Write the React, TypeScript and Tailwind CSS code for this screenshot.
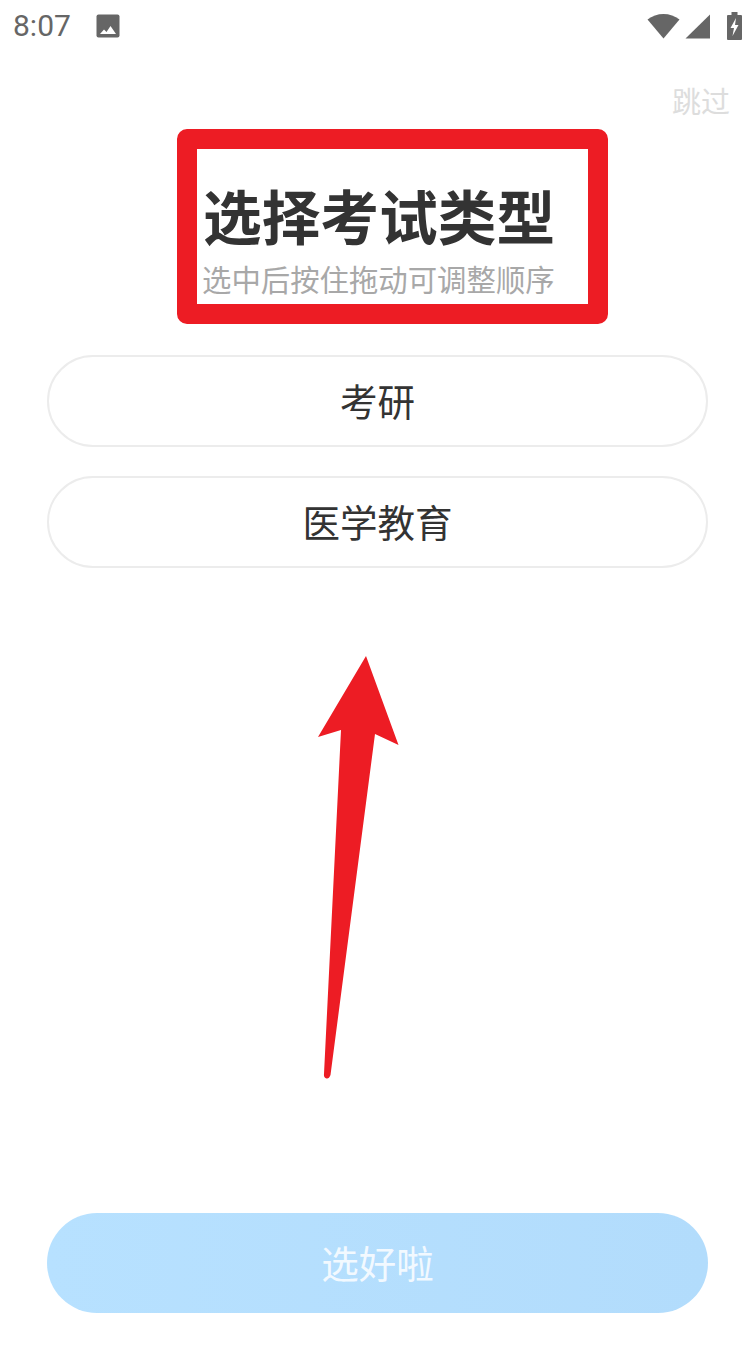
import React from 'react';

const cjk = { fontFamily: '"Noto Sans CJK SC", sans-serif' };

const StatusBar: React.FC = () => (
  <div className="flex h-[52px] items-center pl-[13px] pr-[14px]">
    <span className="font-['Roboto',sans-serif] text-[30px] leading-none text-[#666666]">8:07</span>
    <svg className="ml-[25px] -mt-[1px]" width="24" height="24" viewBox="0 0 24 24">
      <rect x="0.5" y="0.5" width="23" height="23" rx="2" fill="#666666" />
      <path d="M4 20 L8 15.5 L10.5 18 L14.5 12 L20 20 Z" fill="#ffffff" />
    </svg>
    <div className="ml-auto flex items-center">
      <svg width="33" height="26" viewBox="0 0 33 26">
        <path d="M0.5 6.5 C9.5 -1 23.5 -1 32.5 6.5 L16.5 25.5 Z" fill="#666666" />
      </svg>
      <svg className="ml-[5px]" width="26" height="25" viewBox="0 0 26 25">
        <path d="M25 0.5 L25 24.5 L0.5 24.5 Z" fill="#666666" />
      </svg>
      <svg className="ml-[16px]" width="15" height="28" viewBox="0 0 15 28">
        <path d="M4.5 0 H10.5 V3 H14 Q15 3 15 4 V27 Q15 28 14 28 H1 Q0 28 0 27 V4 Q0 3 1 3 H4.5 Z" fill="#666666" />
        <path d="M9 6 L3.5 16 H7 L5.5 24 L11.5 13 H8 Z" fill="#ffffff" />
      </svg>
    </div>
  </div>
);

const OptionButton: React.FC<{ label: string }> = ({ label }) => (
  <button className="flex h-[92px] w-full items-center justify-center rounded-full border-2 border-[#ececec] bg-white pb-[2px] text-[37.5px] leading-none text-[#333333]">
    {label}
  </button>
);

const App: React.FC = () => {
  return (
    <div className="relative flex h-[1345px] w-[756px] flex-col overflow-hidden bg-white" style={cjk}>
      <StatusBar />

      {/* Skip */}
      <div className="mt-[28px] flex justify-end pr-[26px]">
        <span className="text-[29px] leading-[40px] text-[#dddddd]">跳过</span>
      </div>

      {/* Heading */}
      <div className="mt-[9px] ml-[177px] h-[195px] w-[431px] rounded-[10px] border-[20px] border-[#ed1c24]">
        <div className="pt-[32px] pl-[6px]">
          <h1 className="whitespace-nowrap text-[58.7px] font-bold leading-[68px] text-[#333333]">选择考试类型</h1>
          <p className="whitespace-nowrap pt-[9px] -ml-[1px] text-[29.4px] leading-[40px] text-[#a8a8a8]">选中后按住拖动可调整顺序</p>
        </div>
      </div>

      {/* Options */}
      <div className="mt-[31px] flex flex-col gap-[29px] pl-[47px] pr-[48px]">
        <OptionButton label="考研" />
        <OptionButton label="医学教育" />
      </div>

      {/* Confirm */}
      <div className="mt-auto mb-[32px] pl-[47px] pr-[48px]">
        <button className="flex h-[100px] w-full items-center justify-center rounded-full bg-gradient-to-r from-[#b7e1ff] to-[#b2dcfc] pb-[2px] text-[37.5px] leading-none text-[#f2f9ff]">
          选好啦
        </button>
      </div>

      {/* Annotation arrow drawn over the page */}
      <svg className="absolute left-[310px] top-[650px]" width="96" height="436" viewBox="310 650 96 436">
        <path d="M366 656 L398.5 745 L375 734 L330.5 1075 Q329 1079 326.5 1078.5 Q323.5 1078 324 1074 L341 730 L318 737 Z" fill="#ed1c24" />
      </svg>
    </div>
  );
};

export default App;
